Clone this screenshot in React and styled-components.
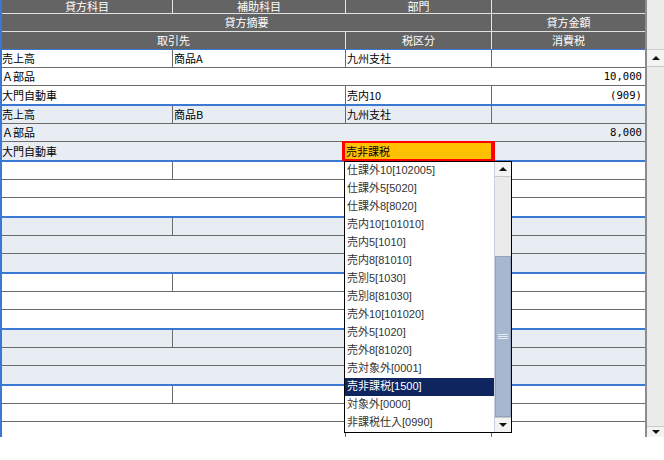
import React from 'react';
import styled, { createGlobalStyle } from 'styled-components';

const GlobalStyle = createGlobalStyle`
  html, body {
    margin: 0;
    padding: 0;
    background: #fff;
  }
  body {
    font-family: "Noto Sans CJK JP", "Liberation Sans", sans-serif;
    font-size: 11px;
  }
  * {
    box-sizing: border-box;
  }
`;

const COLS = '170px 173px 146px 154px';
const LINE = '#6b6b6b';
const BLUE = '#3a78d4';

const Screen = styled.div`
  width: 664px;
  height: 460px;
  background: #fff;
  overflow: hidden;
`;

const GridFrame = styled.div`
  position: relative;
  display: flex;
  height: 437px;
  overflow: hidden;
`;

const Table = styled.div`
  flex: none;
  width: 647px;
  border-left: 2px solid ${BLUE};
  border-right: 2px solid #8c8c8c;
  overflow: hidden;
`;

const HeaderRow = styled.div`
  display: grid;
  grid-template-columns: ${COLS};
  height: ${(p) => p.$h}px;
  background: #646464;
  color: #fff;
  border-bottom: 1px solid ${(p) => (p.$last ? BLUE : '#e2e2e2')};
`;

const HeadCell = styled.div`
  grid-column: span ${(p) => p.$span || 1};
  border-left: ${(p) => (p.$first ? 'none' : '1px solid #e6e6e6')};
  display: flex;
  align-items: center;
  justify-content: center;
  line-height: 1;
  white-space: nowrap;
`;

const Record = styled.div`
  background: ${(p) => (p.$alt ? '#e8edf4' : '#fff')};
  border-bottom: 2px solid ${BLUE};
`;

const Row = styled.div`
  display: grid;
  grid-template-columns: ${COLS};
  height: 18px;
  border-bottom: ${(p) => (p.$last ? 'none' : `1px solid ${LINE}`)};
`;

const Cell = styled.div`
  position: relative;
  grid-column: span ${(p) => p.$span || 1};
  border-left: ${(p) => (p.$divider ? `1px solid ${LINE}` : 'none')};
  display: flex;
  align-items: center;
  justify-content: ${(p) => (p.$num ? 'flex-end' : 'flex-start')};
  padding: ${(p) => (p.$num ? '0 3px 0 0' : p.$divider ? '0 0 0 1px' : '0')};
  font-family: ${(p) =>
    p.$num ? '"DejaVu Sans Mono", "Liberation Mono", monospace' : 'inherit'};
  font-size: ${(p) => (p.$num ? '10.6px' : '11px')};
  color: #000;
  line-height: 1;
  white-space: nowrap;
`;

const Editor = styled.div`
  position: absolute;
  z-index: 2;
  top: -1px;
  left: -4px;
  right: -4px;
  height: 20px;
  background: #ffc000;
  border: 2px solid #f00;
  border-left-width: 3px;
  border-right-width: 4px;
  display: flex;
  align-items: center;
  padding-left: 1px;
  color: #000;
`;

const Dropdown = styled.div`
  position: absolute;
  z-index: 3;
  left: 344px;
  top: 161px;
  width: 168px;
  height: 272px;
  border: 1px solid #000;
  background: #fff;
  display: flex;
`;

const List = styled.div`
  flex: 1;
  display: flex;
  flex-direction: column;
`;

const Item = styled.div`
  height: 18px;
  flex: none;
  display: flex;
  align-items: center;
  padding: 0 0 1px 2px;
  font-family: "Liberation Sans", "Noto Sans CJK JP", sans-serif;
  font-size: 11px;
  color: ${(p) => (p.$selected ? '#fff' : '#333')};
  background: ${(p) => (p.$selected ? '#0e2560' : 'transparent')};
  white-space: nowrap;
  line-height: 1;
`;

const ScrollBar = styled.div`
  flex: none;
  width: 17px;
  display: flex;
  flex-direction: column;
  background: #eaeaea;
  border-left: 1px solid #c9d1dc;
`;

const ScrollButton = styled.div`
  flex: none;
  height: ${(p) => p.$h}px;
  background: #f3f3f3;
  border-top: ${(p) => (p.$down ? '1px solid #c8c8c8' : 'none')};
  border-bottom: ${(p) => (p.$down ? 'none' : '1px solid #c8c8c8')};
  display: flex;
  align-items: center;
  justify-content: center;
`;

const Arrow = styled.span`
  width: 0;
  height: 0;
  border-left: 4px solid transparent;
  border-right: 4px solid transparent;
  ${(p) =>
    p.$down ? 'border-top: 4px solid #111;' : 'border-bottom: 4px solid #111;'}
`;

const Track = styled.div`
  flex: 1;
  display: flex;
  flex-direction: column;
  justify-content: flex-end;
`;

const Thumb = styled.div`
  height: ${(p) => p.$h}px;
  background: #a7b8ce;
  border: 1px solid #91a4bd;
  display: flex;
  align-items: center;
  justify-content: center;
`;

const Grip = styled.div`
  width: 10px;
  height: 5px;
  border-top: 1px solid #e6ecf3;
  border-bottom: 1px solid #e6ecf3;
  position: relative;
  &::after {
    content: '';
    position: absolute;
    left: 0;
    right: 0;
    top: 1px;
    border-top: 1px solid #e6ecf3;
  }
`;

const SideBar = styled.div`
  flex: none;
  width: 17px;
  display: flex;
  flex-direction: column;
  background: #ebebeb;
`;

const SideHead = styled.div`
  flex: none;
  height: 50px;
  background: #ececec;
  border-bottom: 1px solid #cfcfcf;
`;

const taxOptions = [
  '仕課外10[102005]',
  '仕課外5[5020]',
  '仕課外8[8020]',
  '売内10[101010]',
  '売内5[1010]',
  '売内8[81010]',
  '売別5[1030]',
  '売別8[81030]',
  '売外10[101020]',
  '売外5[1020]',
  '売外8[81020]',
  '売対象外[0001]',
  '売非課税[1500]',
  '対象外[0000]',
  '非課税仕入[0990]',
];

const records = [
  {
    account: '売上高',
    sub: '商品A',
    dept: '九州支社',
    memo: 'Ａ部品',
    amount: '10,000',
    partner: '大門自動車',
    tax: '売内10',
    taxAmount: '(909)',
  },
  {
    account: '売上高',
    sub: '商品B',
    dept: '九州支社',
    memo: 'Ａ部品',
    amount: '8,000',
    partner: '大門自動車',
    tax: '売非課税',
    taxAmount: '',
    editing: true,
  },
  {},
  {},
  {},
  {},
  {},
];

const Header = () => (
  <>
    <HeaderRow $h={14}>
      <HeadCell $first>貸方科目</HeadCell>
      <HeadCell>補助科目</HeadCell>
      <HeadCell>部門</HeadCell>
      <HeadCell />
    </HeaderRow>
    <HeaderRow $h={18}>
      <HeadCell $first $span={3}>
        貸方摘要
      </HeadCell>
      <HeadCell>貸方金額</HeadCell>
    </HeaderRow>
    <HeaderRow $h={18} $last>
      <HeadCell $first $span={2}>
        取引先
      </HeadCell>
      <HeadCell>税区分</HeadCell>
      <HeadCell>消費税</HeadCell>
    </HeaderRow>
  </>
);

const RecordRows = ({ rec, alt }) => (
  <Record $alt={alt}>
    <Row>
      <Cell>{rec.account}</Cell>
      <Cell $divider>{rec.sub}</Cell>
      <Cell $divider>{rec.dept}</Cell>
      <Cell $divider />
    </Row>
    <Row>
      <Cell $span={3}>{rec.memo}</Cell>
      <Cell $num>{rec.amount}</Cell>
    </Row>
    <Row $last>
      <Cell $span={2}>{rec.partner}</Cell>
      <Cell $divider>
        {rec.editing ? <Editor>{rec.tax}</Editor> : rec.tax}
      </Cell>
      <Cell $divider $num>
        {rec.taxAmount}
      </Cell>
    </Row>
  </Record>
);

export default function App() {
  return (
    <Screen>
      <GlobalStyle />
      <GridFrame>
        <Table>
          <Header />
          {records.map((rec, i) => (
            <RecordRows key={i} rec={rec} alt={i % 2 === 1} />
          ))}
        </Table>
        <SideBar>
          <SideHead />
          <ScrollButton $h={17}>
            <Arrow />
          </ScrollButton>
          <Track />
          <ScrollButton $h={11} $down>
            <Arrow $down />
          </ScrollButton>
        </SideBar>
        <Dropdown>
          <List>
            {taxOptions.map((opt) => (
              <Item key={opt} $selected={opt === '売非課税[1500]'}>
                {opt}
              </Item>
            ))}
          </List>
          <ScrollBar>
            <ScrollButton $h={15}>
              <Arrow />
            </ScrollButton>
            <Track>
              <Thumb $h={161}>
                <Grip />
              </Thumb>
            </Track>
            <ScrollButton $h={15} $down>
              <Arrow $down />
            </ScrollButton>
          </ScrollBar>
        </Dropdown>
      </GridFrame>
    </Screen>
  );
}
